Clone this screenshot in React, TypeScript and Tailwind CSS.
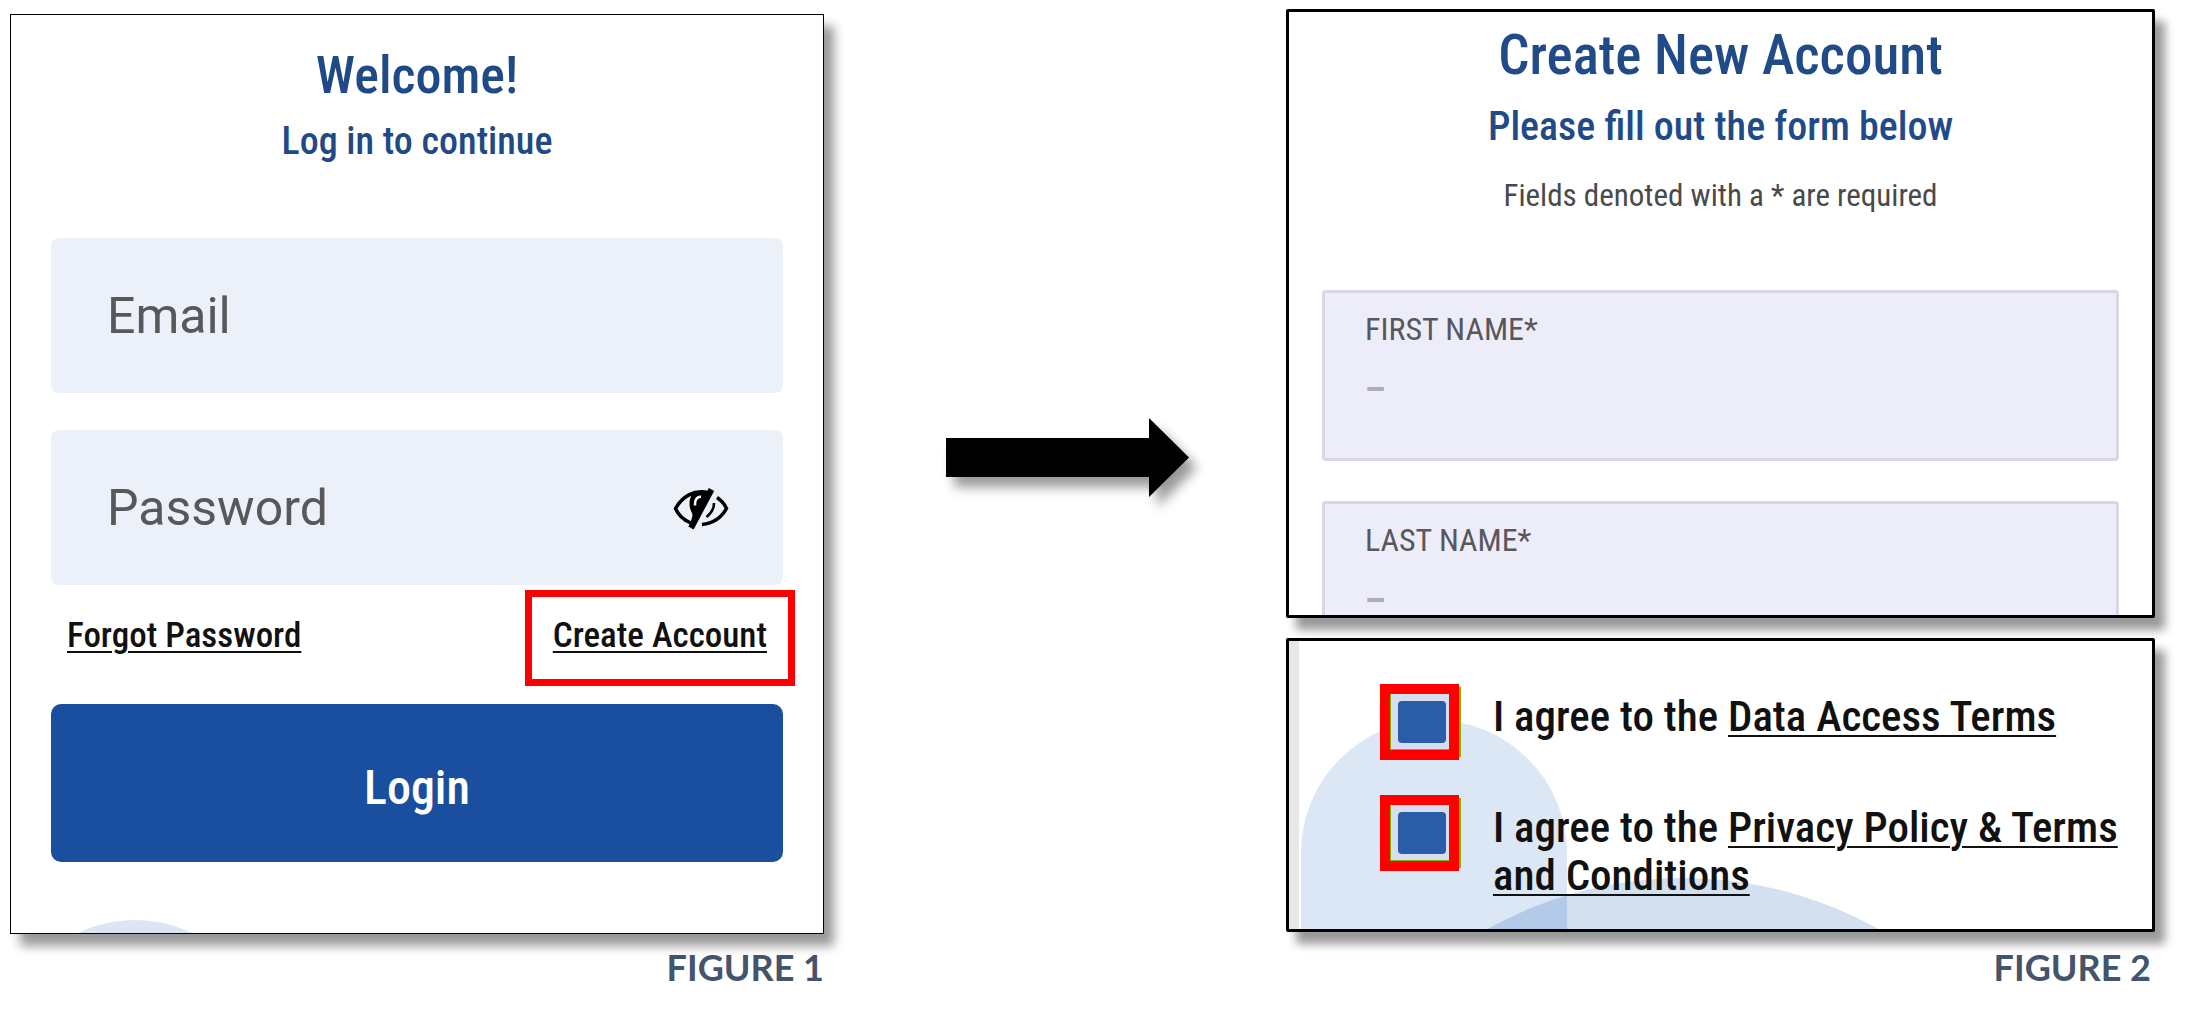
import { useState } from "react";

const heading = "font-['Roboto_Condensed','Liberation_Sans_Narrow',Roboto,sans-serif]";

function HiddenEye() {
  return (
    <svg viewBox="0 0 56 42" className="h-[42px] w-[56px]" fill="none" stroke="#000">
      <path d="M35 4.500C21 1 9 9 2.500 20.500c3 7 8 11.500 15.500 14.500" strokeWidth="3.500" />
      <path d="M20 4c-4.500 8-4.500 15-1 21 1 2 0 5-1 8l3 2L37 4C31 2.500 25 2.500 20 4Z" fill="#000" stroke="none" />
      <path d="M28 8.500c-4 .5-6.500 3.500-6 9" stroke="#fff" strokeWidth="2.500" />
      <path d="M38.500 1.500 18 40" strokeWidth="6" />
      <path d="M44 9.500c4.500 3 7.500 6.500 9.500 11-5 9-13 15-24.500 16" strokeWidth="3.500" />
      <path d="M41 15c0 6-3 10.500-7.500 14" strokeWidth="2.500" />
    </svg>
  );
}

function Arrow() {
  return (
    <svg
      viewBox="0 0 243 79"
      className="h-[79px] w-[243px] drop-shadow-[8px_10px_6px_rgba(0,0,0,0.4)]"
      aria-label="leads to"
    >
      <path d="M0 20h203V0l40 39.500L203 79V59H0Z" />
    </svg>
  );
}

function NameField({ id, label, last }: { id: string; label: string; last?: boolean }) {
  return (
    <div
      className={
        last
          ? "mt-10 h-[114px] overflow-hidden rounded-t border-3 border-b-0 border-[#d8d8e4] bg-[#ededf9] px-10 pt-4"
          : "mt-[74px] h-[171px] rounded border-3 border-[#d8d8e4] bg-[#ededf9] px-10 pt-4"
      }
    >
      <label htmlFor={id} className={`${heading} block text-[32px] leading-10 text-[#58585c]`}>
        {label}
      </label>
      <input
        id={id}
        placeholder="–"
        className="mt-5 block h-10 w-full bg-transparent font-[Roboto,sans-serif] text-[32px] font-black outline-none placeholder:text-[#adadb9]"
      />
    </div>
  );
}

function Agreement({ id, children }: { id: string; children: React.ReactNode }) {
  const [checked, setChecked] = useState(true);
  return (
    <div className="flex items-start gap-[34px]">
      <div className="flex h-[76px] w-[79px] shrink-0 items-center justify-center border-10 border-[#ff0000] bg-[#d6def0] pl-1 shadow-[5px_0_0_-3px_#7ab800,inset_1px_-1px_0_#7ab800]">
        <input
          id={id}
          type="checkbox"
          checked={checked}
          onChange={() => setChecked(!checked)}
          className="h-[42px] w-12 appearance-none rounded bg-white checked:bg-[#2a5ca8]"
        />
      </div>
      <label htmlFor={id} className={`${heading} pt-2 text-[43px] leading-12 font-medium text-[#111]`}>
        {children}
      </label>
    </div>
  );
}

export default function App() {
  const [visible, setVisible] = useState(false);
  return (
    <main className="grid grid-cols-[minmax(0,814fr)_minmax(0,462fr)_minmax(0,869fr)] items-start bg-white pt-[9px] pr-14 pb-10 pl-[10px]">
      <figure className="pt-[5px]">
        <form className="relative border border-black bg-white px-10 pt-[31px] pb-[71px] shadow-[10px_12px_10px_rgba(0,0,0,0.4)]">
          <svg viewBox="0 0 114 13" className="absolute bottom-0 left-[67px] h-[13px] w-[114px]" fill="#dce5f1">
            <circle cx="57" cy="131" r="131" />
          </svg>
          <h1 className={`${heading} text-center text-[52px] leading-[60px] font-medium text-[#1f4a85]`}>Welcome!</h1>
          <p className={`${heading} mt-[13px] text-center text-[38px] leading-11 font-medium text-[#1f4a85]`}>
            Log in to continue
          </p>
          <input
            type="email"
            aria-label="Email"
            placeholder="Email"
            className="mt-[75px] block h-[155px] w-full rounded-lg bg-[#ecf0f9] px-14 font-[Roboto,sans-serif] text-[50px] outline-none placeholder:text-[#58585a]"
          />
          <div className="mt-[37px] flex h-[155px] items-center rounded-lg bg-[#ecf0f9] pt-[2px] pr-[54px] pl-14">
            <input
              type={visible ? "text" : "password"}
              aria-label="Password"
              placeholder="Password"
              className="min-w-0 flex-1 bg-transparent font-[Roboto,sans-serif] text-[50px] outline-none placeholder:text-[#58585a]"
            />
            <button type="button" aria-label="Show password" onClick={() => setVisible(!visible)}>
              <HiddenEye />
            </button>
          </div>
          <div className={`${heading} mt-[29px] flex justify-between px-4 text-[35px] leading-11 font-medium text-[#111]`}>
            <a href="#forgot" className="underline decoration-2 underline-offset-4">
              Forgot Password
            </a>
            <a href="#create" className="relative underline decoration-2 underline-offset-4">
              Create Account
              <span className="absolute -inset-x-7 -top-6 -bottom-7 border-7 border-[#ff0000]" />
            </a>
          </div>
          <button
            type="button"
            className={`${heading} mt-[46px] block h-[158px] w-full rounded-[10px] bg-[#1a4f9f] pt-[10px] text-[48px] font-medium text-white`}
          >
            Login
          </button>
        </form>
        <figcaption className="mt-[9px] text-right font-[Lato,sans-serif] text-[36px] leading-12 font-bold text-[#44546a]">
          FIGURE 1
        </figcaption>
      </figure>

      <div className="flex justify-center pt-[409px] pl-6">
        <Arrow />
      </div>

      <figure>
        <form className="overflow-hidden rounded-xs border-3 border-black bg-white px-[33px] pt-[13px] shadow-[10px_12px_10px_rgba(0,0,0,0.4)]">
          <h2 className={`${heading} text-center text-[55px] leading-[60px] font-medium text-[#214b88]`}>
            Create New Account
          </h2>
          <p className={`${heading} mt-5 text-center text-[40px] leading-11 font-medium text-[#214b88]`}>
            Please fill out the form below
          </p>
          <p className={`${heading} mt-[27px] text-center text-[31px] leading-10 text-[#4a4a4a]`}>
            Fields denoted with a * are required
          </p>
          <NameField id="first" label="FIRST NAME*" />
          <NameField id="last" label="LAST NAME*" last />
        </form>
        <form className="relative mt-5 overflow-hidden rounded-xs border-3 border-black bg-white pt-[43px] pr-5 pb-[30px] pl-[91px] shadow-[10px_12px_10px_rgba(0,0,0,0.4)]">
          <div className="absolute inset-y-0 left-0 w-[10px] bg-[#e8e8e8]" />
          <svg viewBox="0 0 600 209" className="absolute bottom-0 left-0 h-[209px] w-[600px]">
            <defs>
              <clipPath id="arch">
                <path d="M12 209V133a133 133 0 0 1 266 0V209Z" />
              </clipPath>
            </defs>
            <path d="M12 209V133a133 133 0 0 1 266 0V209Z" fill="#dbe7f5" />
            <circle cx="394" cy="557" r="399" fill="#d3e0f0" />
            <circle cx="394" cy="557" r="399" fill="#b3cbe8" clipPath="url(#arch)" />
          </svg>
          <div className="relative flex flex-col gap-[35px]">
            <Agreement id="data-terms">
              I agree to the{" "}
              <a href="#data" className="underline decoration-2 underline-offset-4">
                Data Access Terms
              </a>
            </Agreement>
            <Agreement id="privacy-terms">
              I agree to the{" "}
              <a href="#privacy" className="underline decoration-2 underline-offset-4">
                Privacy Policy &amp; Terms and Conditions
              </a>
            </Agreement>
          </div>
        </form>
        <figcaption className="mt-[11px] pr-1 text-right font-[Lato,sans-serif] text-[36px] leading-12 font-bold text-[#44546a]">
          FIGURE 2
        </figcaption>
      </figure>
    </main>
  );
}
